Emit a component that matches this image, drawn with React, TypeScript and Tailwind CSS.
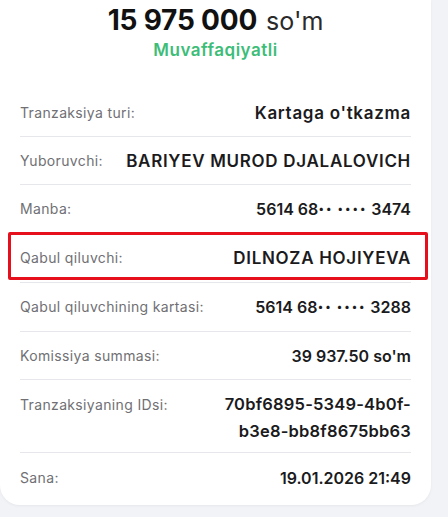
import React from "react";

type Row = { label: string; value: React.ReactNode; h: string; top?: boolean; border?: boolean; boxed?: boolean; kind: "txt" | "num" | "id" };

const Card = ({ a, b }: { a: string; b: string }) => (
  <>
    {a} 68<span className="font-black tracking-[1.5px]">··</span> <span className="font-black tracking-[1.5px]">····</span> {b}
  </>
);

const rows: Row[] = [
  { label: "Tranzaksiya turi:", value: "Kartaga o'tkazma", h: "h-[48px]", border: true, kind: "txt" },
  { label: "Yuboruvchi:", value: "BARIYEV MUROD DJALALOVICH", h: "h-[48px]", border: true, kind: "txt" },
  { label: "Manba:", value: <Card a="5614" b="3474" />, h: "h-[48px]", border: true, kind: "num" },
  { label: "Qabul qiluvchi:", value: "DILNOZA HOJIYEVA", h: "h-[50px]", border: true, boxed: true, kind: "txt" },
  { label: "Qabul qiluvchining kartasi:", value: <Card a="5614" b="3288" />, h: "h-[49px]", border: true, kind: "num" },
  { label: "Komissiya summasi:", value: "39 937.50 so'm", h: "h-[48px]", border: true, kind: "num" },
  {
    label: "Tranzaksiyaning IDsi:",
    value: (
      <>
        70bf6895-5349-4b0f-
        <br />
        b3e8-bb8f8675bb63
      </>
    ),
    h: "h-[73px]",
    top: true,
    border: true,
    kind: "id",
  },
  { label: "Sana:", value: "19.01.2026 21:49", h: "h-[50px]", kind: "num" },
];

const valueCls = {
  txt: "text-[17px] tracking-[0.7px]",
  num: "text-[16px] tracking-[0px]",
  id: "text-[16.5px] tracking-[0.2px]",
};

export default function App() {
  return (
    <div
      className="w-[448px] h-[517px] bg-[#f2f3f7] overflow-hidden"
      style={{ fontFamily: "Inter, 'Open Sans', sans-serif" }}
    >
      <div className="w-[431px] bg-white rounded-b-[20px] shadow-[0_1px_3px_rgba(0,0,0,0.05)] pb-[2px]">
        <div className="flex flex-col items-center pt-[4px]">
          <div className="flex items-baseline gap-[9px] leading-[32px] text-[#111111]">
            <span className="text-[28px] font-bold tracking-[-0.2px]">15 975 000</span>
            <span className="text-[25px] font-normal text-[#2a2a2a]">so'm</span>
          </div>
          <div className="mt-[3px] text-[17px] tracking-[0.5px] leading-[20px] font-semibold text-[#3dbd78]">
            Muvaffaqiyatli
          </div>
        </div>
        <div className="mt-[29px] px-5">
          {rows.map((r, i) => (
            <div
              key={i}
              className={`relative flex justify-between ${r.top ? "items-start pt-[11px]" : "items-center"} ${r.h} ${
                r.border ? "border-b border-[#e6e7eb]" : ""
              }`}
            >
              <span
                className={`text-[14px] tracking-[0.35px] text-[#707074] ${r.top ? "leading-[27px]" : "leading-[20px]"}`}
              >
                {r.label}
              </span>
              <span
                className={`font-semibold text-[#1b1b1d] text-right ${valueCls[r.kind]} ${
                  r.top ? "leading-[27px]" : "leading-[22px]"
                }`}
              >
                {r.value}
              </span>
              {r.boxed && (
                <span className="absolute left-[-12px] right-[-17px] top-[-1px] bottom-[2px] border-[3px] border-[#e5101b] rounded-[2px] pointer-events-none" />
              )}
            </div>
          ))}
        </div>
      </div>
    </div>
  );
}
